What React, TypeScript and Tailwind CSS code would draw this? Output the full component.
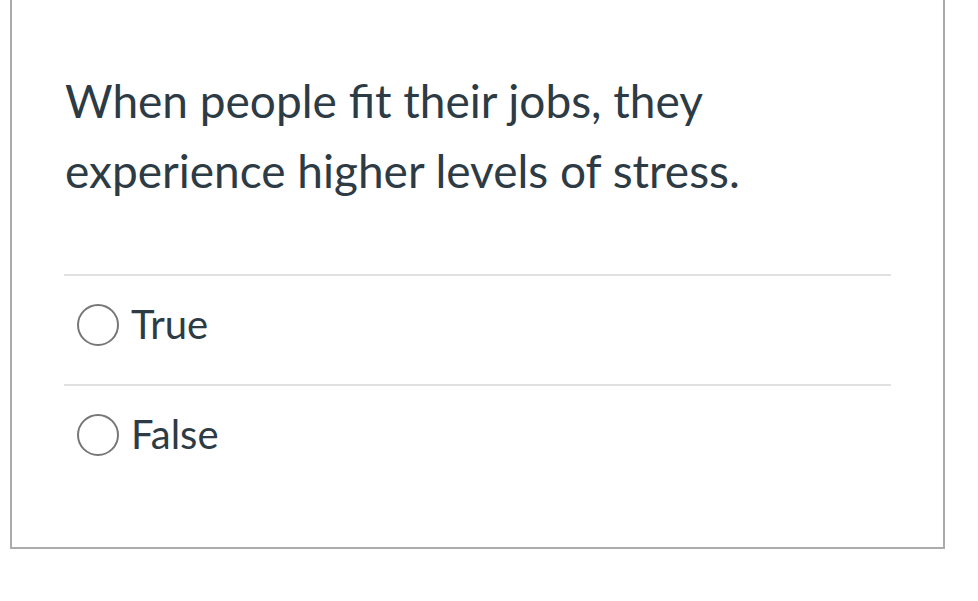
export default function App() {
  const answers = ["True", "False"];
  return (
    <div className="w-[978px] h-[601px] bg-white" style={{ fontFamily: "Lato, 'Open Sans', sans-serif" }}>
      <div className="ml-[10px] w-[935px] h-[549px] border-2 border-t-0 border-[#ababab] px-[52px] pt-[66px]">
        <p className="text-[46px] leading-[70px] text-[#2d3b45] pl-[1px]">
          When people fit their jobs, they
          <br />
          experience higher levels of stress.
        </p>
        <div className="mt-[68px]">
          {answers.map((a) => (
            <div key={a} className="border-t-2 border-[#e0e0e0] h-[110px] flex items-center pl-[13px] pb-[10px]">
              <span className="w-[42px] h-[42px] rounded-full border-2 border-[#777777] shrink-0" />
              <span className="ml-[12px] text-[40px] leading-none text-[#2d3b45] -mt-[2px]">{a}</span>
            </div>
          ))}
        </div>
      </div>
    </div>
  );
}
